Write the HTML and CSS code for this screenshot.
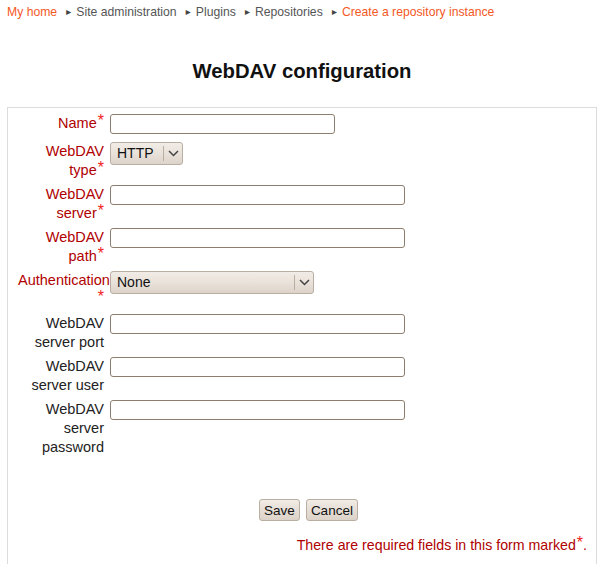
FILE: index.html
```html
<!DOCTYPE html>
<html lang="en">
<head>
  <meta charset="UTF-8">
  <title>WebDAV configuration</title>
  <link rel="stylesheet" href="styles.css">
</head>
<body>
  <div class="page">
    <div class="navbar">
      <a href="#" class="crumb-link">My home</a>
      <span class="sep">&#9658;</span>
      <span>Site administration</span>
      <span class="sep">&#9658;</span>
      <span>Plugins</span>
      <span class="sep">&#9658;</span>
      <span>Repositories</span>
      <span class="sep">&#9658;</span>
      <a href="#" class="crumb-link">Create a repository instance</a>
    </div>

    <h2 class="main-title">WebDAV configuration</h2>

    <form class="mform">
      <fieldset class="form-box">
        <div class="fitem">
          <label class="fitemtitle required">Name<span class="req">*</span></label>
          <div class="felement"><input type="text" class="text short"></div>
        </div>
        <div class="fitem">
          <label class="fitemtitle required">WebDAV<br>type<span class="req">*</span></label>
          <div class="felement">
            <div class="select sel-type"><span class="sel-value">HTTP</span><span class="sel-arrow"><svg width="11" height="7" viewBox="0 0 11 7"><path d="M1 1 L5.5 5.5 L10 1" fill="none" stroke="#444" stroke-width="1.5"/></svg></span></div>
          </div>
        </div>
        <div class="fitem">
          <label class="fitemtitle required">WebDAV<br>server<span class="req">*</span></label>
          <div class="felement"><input type="text" class="text"></div>
        </div>
        <div class="fitem">
          <label class="fitemtitle required">WebDAV<br>path<span class="req">*</span></label>
          <div class="felement"><input type="text" class="text"></div>
        </div>
        <div class="fitem">
          <label class="fitemtitle required">Authentication<br><span class="req">*</span></label>
          <div class="felement">
            <div class="select sel-auth"><span class="sel-value">None</span><span class="sel-arrow"><svg width="11" height="7" viewBox="0 0 11 7"><path d="M1 1 L5.5 5.5 L10 1" fill="none" stroke="#444" stroke-width="1.5"/></svg></span></div>
          </div>
        </div>
        <div class="fitem">
          <label class="fitemtitle">WebDAV server port</label>
          <div class="felement"><input type="text" class="text"></div>
        </div>
        <div class="fitem">
          <label class="fitemtitle">WebDAV server user</label>
          <div class="felement"><input type="text" class="text"></div>
        </div>
        <div class="fitem">
          <label class="fitemtitle">WebDAV server password</label>
          <div class="felement"><input type="password" class="text"></div>
        </div>

        <div class="buttons">
          <button type="button" class="btn">Save</button>
          <button type="button" class="btn">Cancel</button>
        </div>

        <div class="fdescription">There are required fields in this form marked<span class="req">*</span>.</div>
      </fieldset>
    </form>
  </div>
</body>
</html>
```

FILE: styles.css
```css
* {
  margin: 0;
  padding: 0;
  box-sizing: border-box;
}

body {
  background: #fff;
  font-family: 'Liberation Sans', Arial, sans-serif;
  font-size: 14.5px;
  color: #222;
}

.page {
  padding: 0 8px 0 7px;
}

.navbar {
  padding-top: 4px;
  line-height: 16px;
  font-size: 12.2px;
  color: #555;
}

.navbar .sep {
  font-size: 8.5px;
  color: #444;
  margin: 0 0 0 4px;
  position: relative;
  top: -1px;
}

.crumb-link {
  color: #f4581f;
  text-decoration: none;
}

.main-title {
  margin-top: 38px;
  font-size: 20.3px;
  font-weight: bold;
  text-align: center;
  line-height: 24px;
  color: #111;
}

.form-box {
  margin-top: 24px;
  border: 1px solid #dcdcdc;
  border-bottom: none;
  padding: 6px 0 30px 0;
  height: 470px;
}

.fitem {
  display: grid;
  grid-template-columns: 96px 1fr;
  column-gap: 6px;
  min-height: 23px;
  margin-bottom: 5px;
}

.fitemtitle {
  text-align: right;
  line-height: 19px;
  padding-left: 10px;
  color: #222;
}

.fitemtitle.required {
  color: #b00000;
}

.req {
  color: #f02020;
  font-size: 16px;
  line-height: 14px;
  vertical-align: top;
  margin-left: 1px;
}

.text {
  display: block;
  width: 295px;
  height: 20px;
  border: 1px solid #8c7d6e;
  border-radius: 3px;
  background: #fff;
  font: inherit;
  padding: 0 3px;
}

.text.short {
  width: 225px;
}

.select {
  display: flex;
  align-items: stretch;
  height: 23px;
  border: 1px solid #b9aea2;
  border-radius: 3px;
  background: linear-gradient(#f1ece6, #e9e2da 50%, #ddd3ca);
  color: #111;
  font-size: 14px;
}

.sel-type {
  width: 73px;
}

.sel-auth {
  width: 204px;
}

.sel-value {
  flex: 1;
  line-height: 21px;
  padding-left: 6px;
}

.sel-arrow {
  width: 19px;
  border-left: 1px solid #b9aea2;
  margin: 3px 0;
  display: flex;
  align-items: center;
  justify-content: center;
}

.buttons {
  margin-top: 42px;
  display: flex;
  justify-content: center;
  gap: 6px;
  padding-left: 13px;
}

.btn {
  height: 22px;
  padding: 0 4px;
  border: 1px solid #b9aea2;
  border-radius: 3px;
  background: linear-gradient(#f1ece6, #e6ded6 50%, #dcd2c8);
  font: inherit;
  font-size: 13.5px;
  color: #111;
}

.fdescription {
  margin-top: 15px;
  text-align: right;
  padding-right: 9px;
  font-size: 14.2px;
  color: #b00000;
  line-height: 19px;
}
```
